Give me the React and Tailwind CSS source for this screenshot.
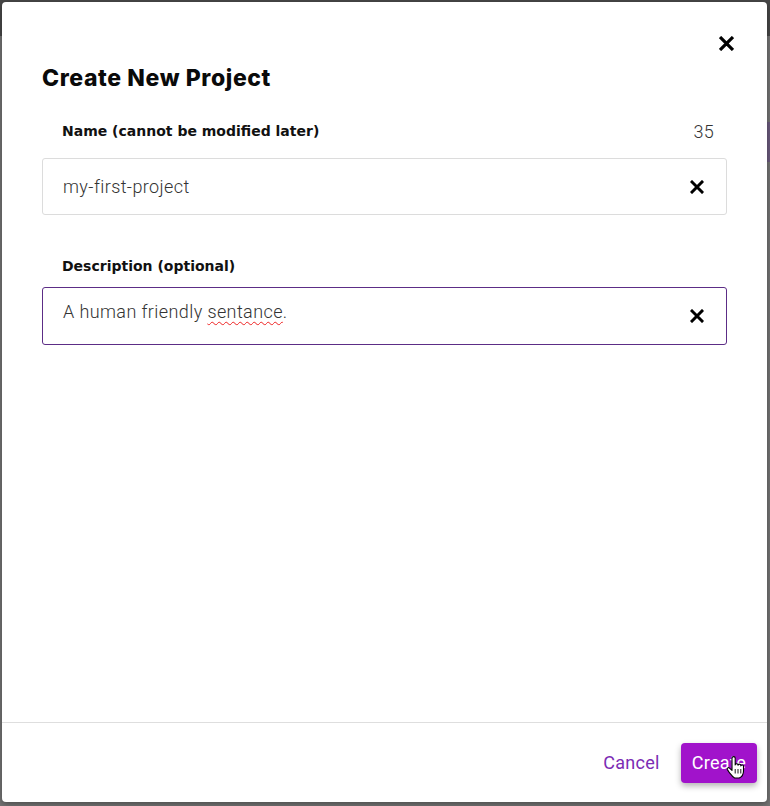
// Modal: "Create New Project" over a dimmed page
function ClearIcon({ className = '' }) {
  return (
    <svg viewBox="0 0 14 14" className={className} fill="none" stroke="currentColor" strokeWidth="3" strokeLinecap="square">
      <path d="M2 2 L12 12 M12 2 L2 12" />
    </svg>
  )
}

function HandCursor({ className = '' }) {
  return (
    <svg viewBox="0 0 19 24" className={className}>
      <path
        d="M6 2.2a1.6 1.6 0 0 1 3.2 0V9a1.4 1.4 0 0 1 2.8 0.3a1.4 1.4 0 0 1 2.8 0.6a1.4 1.4 0 0 1 2.7 0.7V15c0 3.2 -1.6 5.8 -4.2 7H8.6c-1.6 -0.9 -3.2 -2.7 -4.8 -4.8L1.4 13.6a1.3 1.3 0 0 1 2.1 -1.5L6 14.3Z"
        fill="#fff"
        stroke="#000"
        strokeWidth="1.1"
        strokeLinejoin="round"
      />
      <path d="M9.2 13v4.5M12 13v4.5M14.8 13v4.5" stroke="#000" strokeWidth="0.9" />
    </svg>
  )
}

function Field({ label, counter, value, focused, spell, labelGap }) {
  return (
    <div className="flex flex-col">
      <div className={'flex items-center justify-between pl-[20px] pr-[13px] h-[28px] ' + labelGap}>
        <span className="text-[14px] font-bold text-[#111]" style={{ fontFamily: '"DejaVu Sans", Inter, sans-serif' }}>
          {label}
        </span>
        {counter && <span className="text-[18px] font-light text-[#333] tracking-[0.3px]">{counter}</span>}
      </div>
      <div
        className={
          'flex items-center justify-between rounded-[3px] border pl-[20px] pr-[22px] ' +
          (focused ? 'h-[58px] border-[#5c2d86]' : 'h-[57px] border-[#dcdcdc]')
        }
      >
        <span className={'text-[18px] text-[#333] font-light tracking-[0.4px] ' + (focused ? '-mt-[10px]' : '')}>
          {spell ? (
            <>
              A human friendly{' '}
              <span className="underline decoration-wavy decoration-[#e22] decoration-1 underline-offset-[3px]">sentance</span>.
            </>
          ) : (
            value
          )}
        </span>
        <ClearIcon className="w-[14px] h-[14px] text-black" />
      </div>
    </div>
  )
}

export default function App() {
  return (
    <div className="relative w-[770px] h-[806px] bg-[#737373] overflow-hidden" style={{ fontFamily: 'Roboto, "Liberation Sans", sans-serif' }}>
      <div className="h-[36px] bg-[#474747]" />
      <div className="absolute right-0 top-[122px] w-[3px] h-[40px] bg-[#6b5a7d]" />

      <div className="absolute left-[2px] top-[2px] w-[765px] h-[800px] bg-white rounded-[4px] shadow-[0_2px_6px_rgba(0,0,0,0.35)] flex flex-col">
        <button className="absolute right-[33px] top-[34px] text-black">
          <ClearIcon className="w-[15px] h-[15px]" />
        </button>

        <div className="flex-1 px-[40px] pt-[62px]">
          <h2
            className="text-[23px] leading-[28px] font-extrabold text-[#0a0a0a] tracking-[0.6px] mb-[25px]"
            style={{ fontFamily: 'Inter, "Noto Sans", sans-serif' }}
          >
            Create New Project
          </h2>
          <div className="flex flex-col gap-[37px]">
            <Field label="Name (cannot be modified later)" counter="35" value="my-first-project" labelGap="mb-[13px]" />
            <Field label="Description (optional)" focused spell labelGap="mb-[7px]" />
          </div>
        </div>

        <div className="h-[80px] border-t border-[#dedede] flex items-center justify-end gap-[21px] pr-[10px]">
          <button className="text-[18px] text-[#7b2cb4] tracking-[0.3px]">Cancel</button>
          <button className="h-[40px] px-[11px] rounded-[4px] bg-[#a113cb] text-white text-[18px] tracking-[0.3px] shadow-[0_3px_6px_rgba(0,0,0,0.3)]">
            Create
          </button>
        </div>
      </div>

      <HandCursor className="absolute left-[726px] top-[756px] w-[19px] h-[24px]" />
    </div>
  )
}
